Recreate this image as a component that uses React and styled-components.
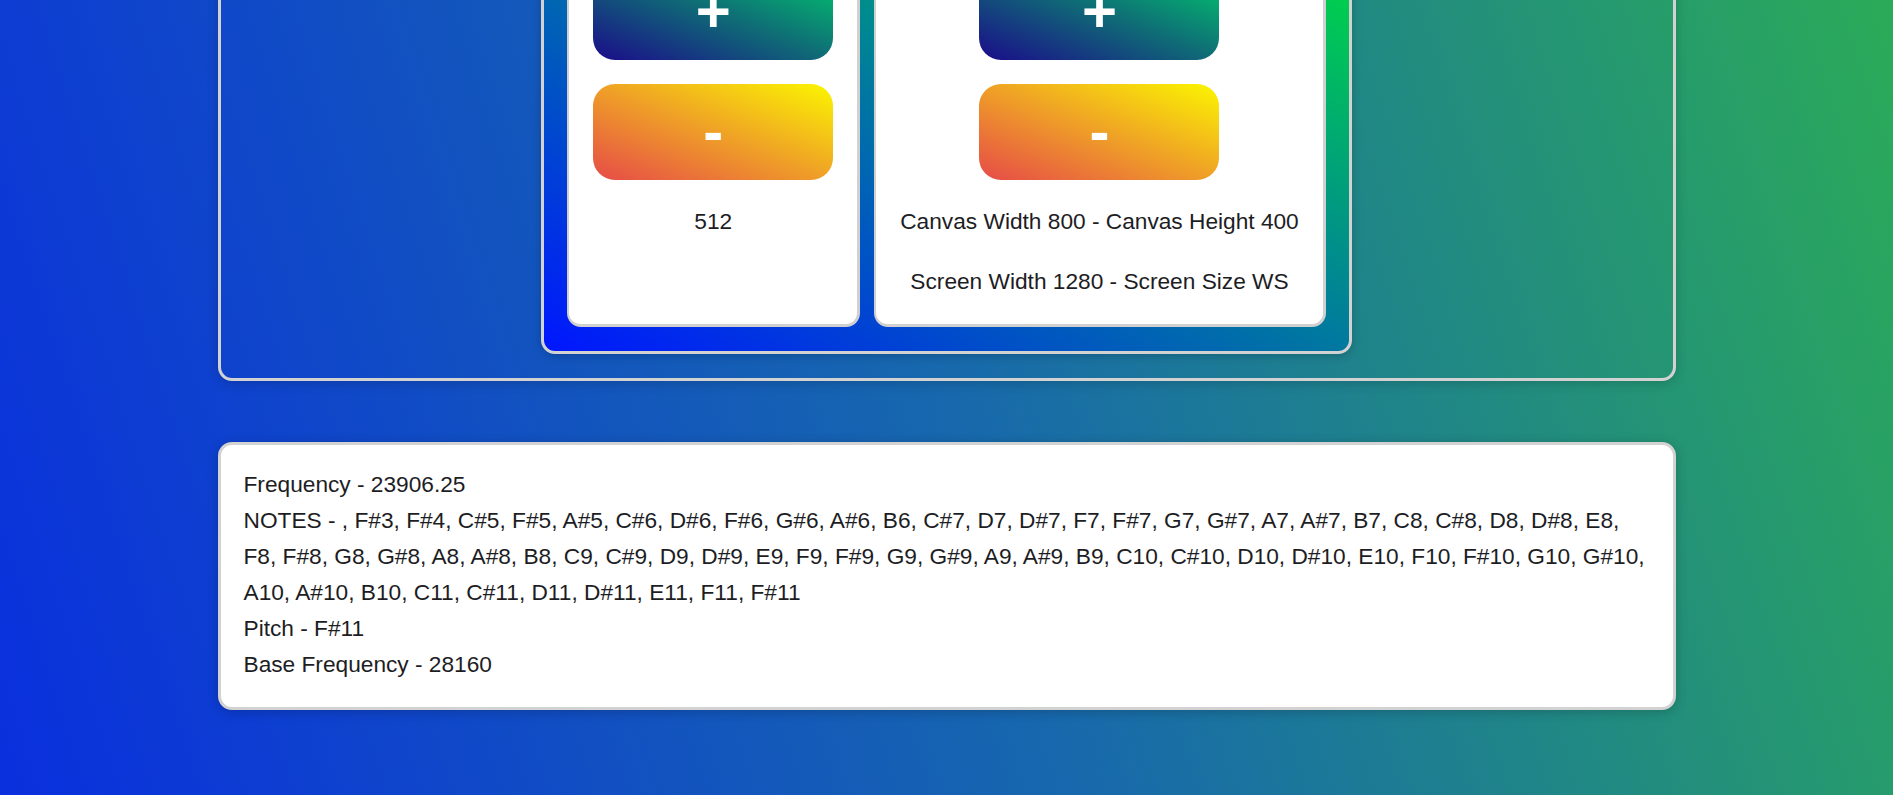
import React from 'react'
import styled, { createGlobalStyle } from 'styled-components'

const GlobalStyle = createGlobalStyle`
  html, body {
    margin: 0;
    min-height: 100%;
  }
  body {
    font-family: 'Liberation Sans', Arial, sans-serif;
    color: #1d1d24;
    background: linear-gradient(72deg, #0a2fde 0%, #1768ad 50%, #2bab58 100%) fixed;
    min-height: 100vh;
    overflow: hidden;
  }
`

const notes = [
  '', 'F#3', 'F#4', 'C#5', 'F#5', 'A#5', 'C#6', 'D#6', 'F#6', 'G#6', 'A#6', 'B6', 'C#7', 'D7', 'D#7',
  'F7', 'F#7', 'G7', 'G#7', 'A7', 'A#7', 'B7', 'C8', 'C#8', 'D8', 'D#8', 'E8', 'F8', 'F#8', 'G8',
  'G#8', 'A8', 'A#8', 'B8', 'C9', 'C#9', 'D9', 'D#9', 'E9', 'F9', 'F#9', 'G9', 'G#9', 'A9', 'A#9',
  'B9', 'C10', 'C#10', 'D10', 'D#10', 'E10', 'F10', 'F#10', 'G10', 'G#10', 'A10', 'A#10', 'B10',
  'C11', 'C#11', 'D11', 'D#11', 'E11', 'F11', 'F#11'
]

export default function App () {
  return (
    <>
      <GlobalStyle />
      <Page>
        <Panel>
          <Controls>
            <Card>
              <Buttons>
                <StepButton kind='up'>+</StepButton>
                <StepButton kind='down'>-</StepButton>
              </Buttons>
              <Readout>512</Readout>
            </Card>
            <Card>
              <Buttons>
                <StepButton kind='up'>+</StepButton>
                <StepButton kind='down'>-</StepButton>
              </Buttons>
              <Readout>Canvas Width 800 - Canvas Height 400</Readout>
              <Readout>Screen Width 1280 - Screen Size WS</Readout>
            </Card>
          </Controls>
        </Panel>

        <InfoBox>
          <InfoLine>Frequency - 23906.25</InfoLine>
          <InfoLine>NOTES - {notes.join(', ')}</InfoLine>
          <InfoLine>Pitch - F#11</InfoLine>
          <InfoLine>Base Frequency - 28160</InfoLine>
        </InfoBox>
      </Page>
    </>
  )
}

const Page = styled.main`
  width: 1458px;
  margin: -116px auto 0;
  display: flex;
  flex-direction: column;
  gap: 61px;
`

const Panel = styled.section`
  display: flex;
  justify-content: center;
  padding: 24px;
  border: 3px solid #d2d2d2;
  border-radius: 14px;
  box-shadow: 0 2px 12px rgba(0, 0, 0, 0.18);
`

const Controls = styled.div`
  display: flex;
  gap: 14px;
  padding: 24px 23px;
  border: 3px solid #d2d2d2;
  border-radius: 14px;
  background: linear-gradient(to top right, #0016ff 0%, #0078a0 50%, #00e23c 100%);
  box-shadow: 0 2px 10px rgba(0, 0, 0, 0.2);
`

const Card = styled.div`
  display: flex;
  flex-direction: column;
  align-items: center;
  padding: 24px 24px 30px;
  background: #fff;
  border: 3px solid #d0d0d0;
  border-top-width: 2px;
  border-left-width: 2px;
  border-radius: 14px;
`

const Buttons = styled.div`
  display: flex;
  flex-direction: column;
  gap: 24px;
  margin-bottom: 28px;
`

const StepButton = styled.button`
  width: 240px;
  height: 96px;
  border: none;
  border-radius: 22px;
  color: #fff;
  font-family: 'Liberation Sans', Arial, sans-serif;
  font-size: 60px;
  font-weight: 700;
  line-height: 1;
  cursor: pointer;
  background: ${p => p.kind === 'up'
    ? 'linear-gradient(to top right, #1b0c8a 0%, #0f6b76 50%, #00d06c 100%)'
    : 'linear-gradient(to top right, #e64b48 0%, #efa027 50%, #fbf600 100%)'};
`

const Readout = styled.p`
  margin: 0;
  font-size: 22.7px;
  line-height: 26px;
  text-align: center;
  white-space: nowrap;

  & + & {
    margin-top: 34px;
  }
`

const InfoBox = styled.section`
  padding: 21px 22px 25px 23px;
  background: #fff;
  border: 3px solid #d2d2d2;
  border-radius: 14px;
  box-shadow: 0 2px 12px rgba(0, 0, 0, 0.2);
`

const InfoLine = styled.div`
  font-size: 22.7px;
  line-height: 36px;
`
